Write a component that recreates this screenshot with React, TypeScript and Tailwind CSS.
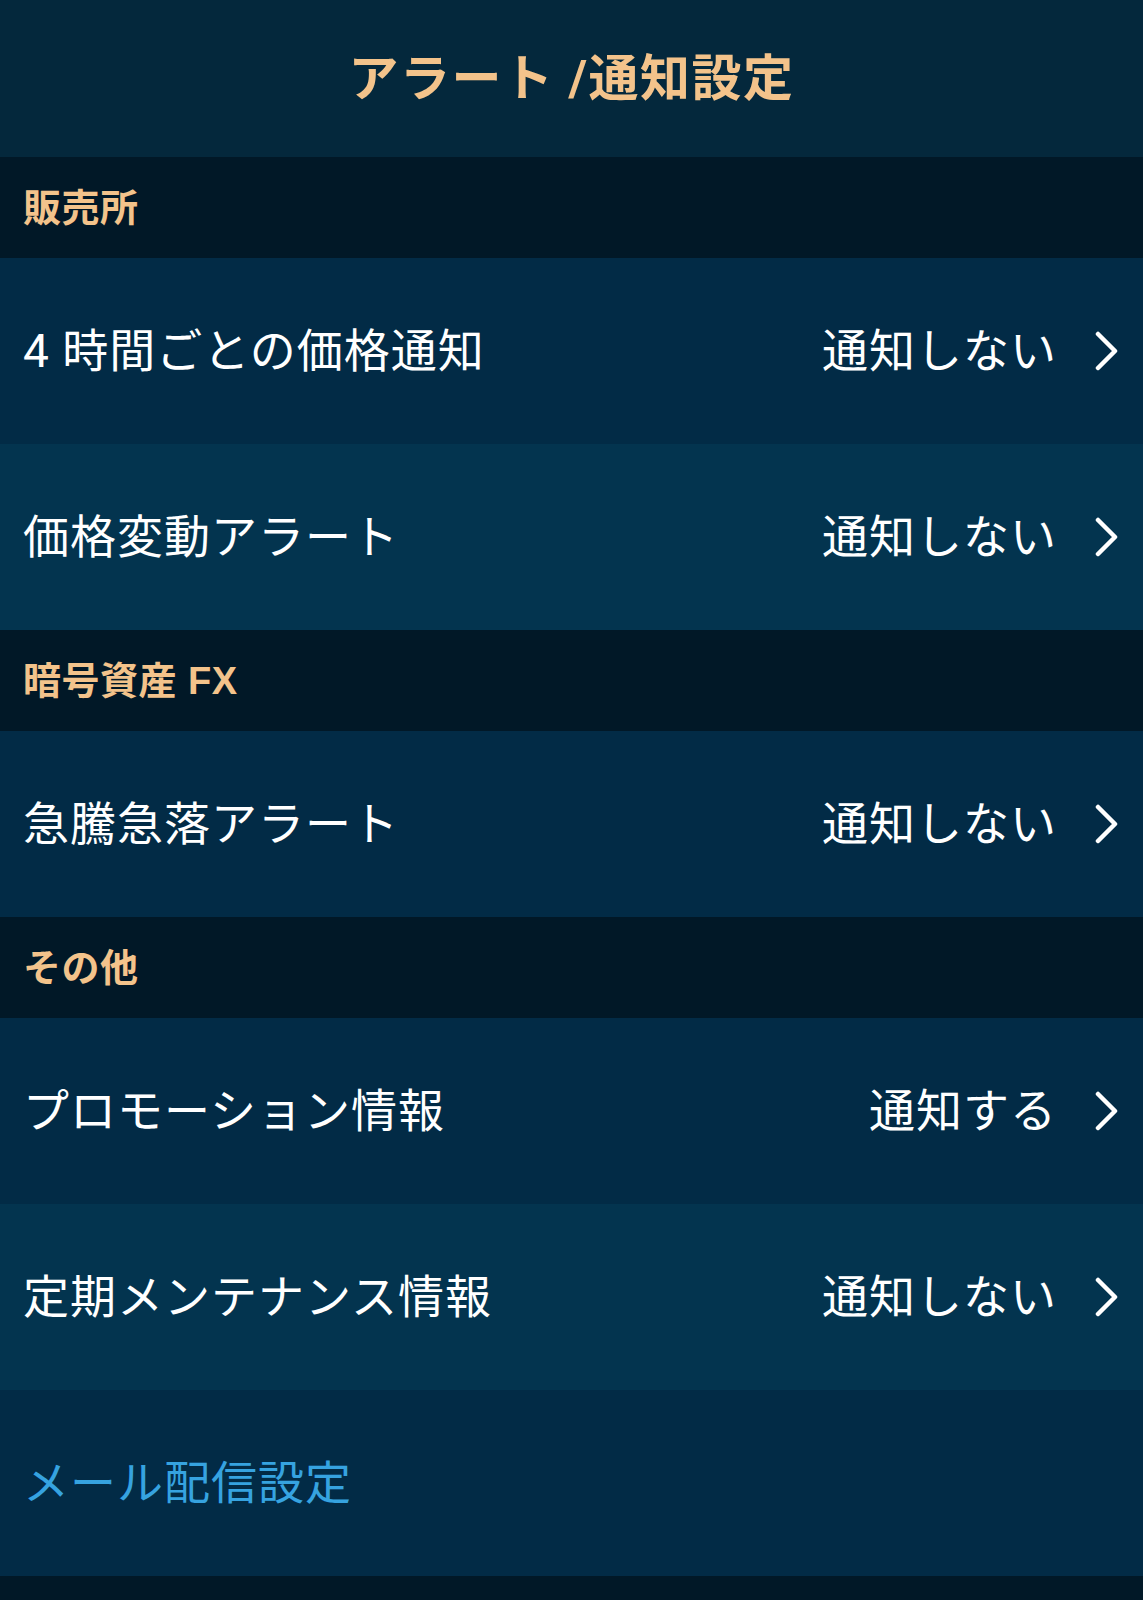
import React from "react";

const FONT = { fontFamily: 'Roboto, "Noto Sans CJK JP", "Noto Sans", sans-serif' };
const SECTION_FONT = { fontFamily: '"Liberation Sans", "Noto Sans CJK JP", sans-serif' };

function Chevron() {
  return (
    <svg width="26" height="40" viewBox="0 0 26 40" className="shrink-0">
      <path d="M4 3 L21 20 L4 37" fill="none" stroke="white" strokeWidth="4.5" strokeLinecap="round" strokeLinejoin="round" />
    </svg>
  );
}

function Section({ title }: { title: string }) {
  return (
    <div className="h-[101px] bg-[#011827] flex items-center px-[23px]">
      <span style={SECTION_FONT} className="text-[#f3c38b] text-[38px] font-bold leading-none tracking-[0.5px]">{title}</span>
    </div>
  );
}

function Row({ label, value, alt }: { label: string; value: string; alt?: boolean }) {
  return (
    <div className={`h-[186px] flex items-center pl-[23px] pr-[23px] ${alt ? "bg-[#03344f]" : "bg-[#022b46]"}`}>
      <span className="text-white text-[46px] leading-none tracking-[1px] flex-1">{label}</span>
      <span className="text-white text-[46px] leading-none tracking-[1px] mr-[37px]">{value}</span>
      <Chevron />
    </div>
  );
}

export default function App() {
  return (
    <div style={FONT} className="w-[1143px] h-[1600px] bg-[#011827] flex flex-col">
      <div className="h-[157px] bg-[#04283c] flex items-center justify-center">
        <span className="text-[#f3c38b] text-[50px] font-bold leading-none tracking-[1.5px]">アラート /通知設定</span>
      </div>
      <Section title="販売所" />
      <Row label="4 時間ごとの価格通知" value="通知しない" />
      <Row label="価格変動アラート" value="通知しない" alt />
      <Section title="暗号資産 FX" />
      <Row label="急騰急落アラート" value="通知しない" />
      <Section title="その他" />
      <Row label="プロモーション情報" value="通知する" />
      <Row label="定期メンテナンス情報" value="通知しない" alt />
      <div className="h-[186px] bg-[#022b46] flex items-center px-[23px]">
        <span className="text-[#36a3e0] text-[46px] leading-none tracking-[1px]">メール配信設定</span>
      </div>
    </div>
  );
}
